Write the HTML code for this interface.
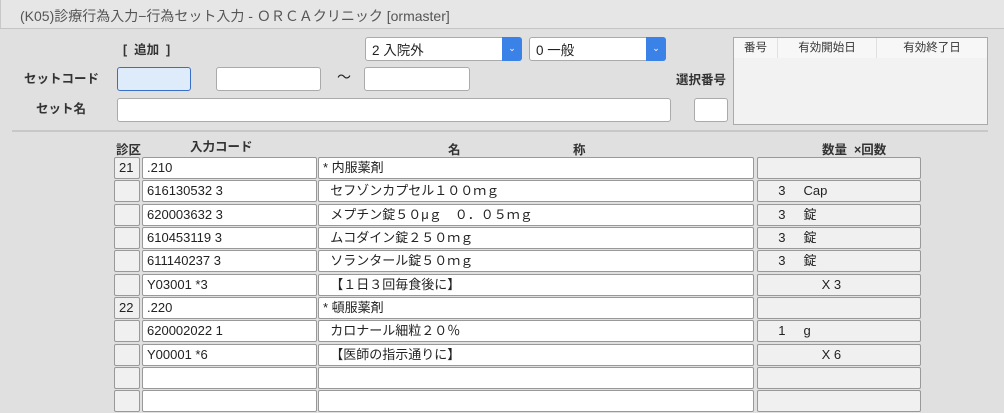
<!DOCTYPE html>
<html><head><meta charset="utf-8"><style>
*{box-sizing:border-box;margin:0;padding:0}
body{width:1004px;height:413px;background:#e0e0e0;font-family:"Liberation Sans","Noto Sans CJK JP",sans-serif;font-size:13px;color:#222;position:relative;overflow:hidden}
.a{position:absolute}
.title{left:0;top:0;width:1004px;height:29px;background:#e6e6e6;border-bottom:1px solid #c4c4c4;border-left:1px solid #c8c8c8;padding:6px 0 0 19px;font-size:14px;color:#555}
.inp{position:absolute;background:#fff;border:1px solid #aaa;border-radius:3px;height:24px}
.lbl{position:absolute;font-weight:bold;font-size:12.5px;color:#333}
.sel{position:absolute;background:#fff;border:1px solid #aaa;border-radius:3px;height:24px;padding:1px 6px;font-size:13.5px}
.sel .ar{position:absolute;right:-1px;top:-1px;width:20px;height:24px;background:#3b82e8;border-radius:0 3px 3px 0;color:#fff;font-size:9px;text-align:center;line-height:22px}
.c{position:absolute;height:22px;border:1px solid #999;border-radius:2px;font-size:13px;line-height:20px;padding-left:4px;white-space:pre}
.w{background:#fff}.g{background:#f0f0f0}
.q{padding-left:13px}
</style></head><body>
<div class="a title">(K05)診療行為入力−行為セット入力 - ＯＲＣＡクリニック [ormaster]</div>
<div class="lbl" style="left:123px;top:39px;white-space:pre">[  追加  ]</div>
<div class="lbl" style="left:24px;top:68px">セットコード</div>
<div class="lbl" style="left:36px;top:98px">セット名</div>
<div class="inp" style="left:117px;top:67px;width:74px;background:#deebfb;border:1.5px solid #3a6fc8"></div>
<div class="inp" style="left:216px;top:67px;width:105px"></div>
<div class="a" style="left:337px;top:67px;font-size:14px">〜</div>
<div class="inp" style="left:364px;top:67px;width:106px"></div>
<div class="inp" style="left:117px;top:98px;width:554px"></div>
<div class="sel" style="left:365px;top:37px;width:157px">2 入院外<div class="ar">⌄</div></div>
<div class="sel" style="left:529px;top:37px;width:137px">0 一般<div class="ar">⌄</div></div>
<div class="lbl" style="left:676px;top:69px">選択番号</div>
<div class="inp" style="left:694px;top:98px;width:34px"></div>
<div class="a" style="left:733px;top:37px;width:255px;height:88px;background:#f2f2f2;border:1px solid #aaa">
<div style="display:flex;height:20px;background:#f7f7f7;font-size:11.5px;line-height:20px;text-align:center;color:#333">
<div style="width:44px;border-right:1px solid #e0e0e0">番号</div><div style="width:99px;border-right:1px solid #e0e0e0">有効開始日</div><div style="flex:1">有効終了日</div></div></div>
<div class="a" style="left:12px;top:130px;width:976px;height:2px;background:#c8c8c8"></div>
<div class="lbl" style="left:116px;top:139px">診区</div>
<div class="lbl" style="left:190px;top:136px">入力コード</div>
<div class="lbl" style="left:448px;top:139px">名</div>
<div class="lbl" style="left:573px;top:139px">称</div>
<div class="lbl" style="left:822px;top:139px;white-space:pre">数量  ×回数</div>
<div id="rows"></div>
<script>
var d=[["21",".210","* 内服薬剤",""],["","616130532 3","  セフゾンカプセル１００ｍｇ","  3     Cap"],["","620003632 3","  メプチン錠５０μｇ　０．０５ｍｇ","  3     錠"],["","610453119 3","  ムコダイン錠２５０ｍｇ","  3     錠"],["","611140237 3","  ソランタール錠５０ｍｇ","  3     錠"],["","Y03001 *3","  【１日３回毎食後に】","              X 3"],["22",".220","* 頓服薬剤",""],["","620002022 1","  カロナール細粒２０％","  1     g"],["","Y00001 *6","  【医師の指示通りに】","              X 6"],["","","",""],["","","",""]];
var h="";d.forEach(function(r,i){var y=157+Math.round(i*23.33);
h+='<div class="c g" style="left:114px;top:'+y+'px;width:26px">'+r[0]+'</div>';
h+='<div class="c w" style="left:142px;top:'+y+'px;width:175px">'+r[1]+'</div>';
h+='<div class="c w" style="left:318px;top:'+y+'px;width:436px">'+r[2]+'</div>';
h+='<div class="c g q" style="left:757px;top:'+y+'px;width:164px">'+r[3]+'</div>';});
document.getElementById("rows").innerHTML=h;
</script>
</body></html>
